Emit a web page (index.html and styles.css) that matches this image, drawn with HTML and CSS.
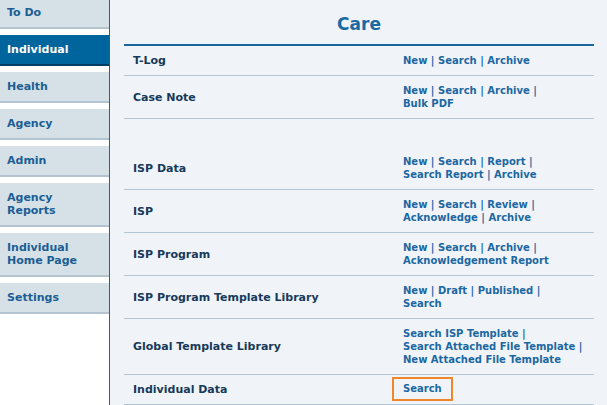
FILE: index.html
```html
<!DOCTYPE html>
<html>
<head>
<meta charset="utf-8">
<link rel="stylesheet" href="styles.css">
</head>
<body>
<div class="page">
  <nav class="sidebar">
    <div class="tab tab-first">To Do</div>
    <div class="tab tab-active">Individual</div>
    <div class="tab">Health</div>
    <div class="tab">Agency</div>
    <div class="tab">Admin</div>
    <div class="tab">Agency<br>Reports</div>
    <div class="tab">Individual<br>Home Page</div>
    <div class="tab">Settings</div>
  </nav>
  <main class="main">
    <h1 class="title">Care</h1>
    <div class="care-table">
      <div class="row">
        <div class="label">T-Log</div>
        <div class="links"><a>New</a> | <a>Search</a> | <a>Archive</a></div>
      </div>
      <div class="row">
        <div class="label">Case Note</div>
        <div class="links"><a>New</a> | <a>Search</a> | <a>Archive</a> |<br><a>Bulk PDF</a></div>
      </div>
      <div class="spacer"></div>
      <div class="row">
        <div class="label">ISP Data</div>
        <div class="links"><a>New</a> | <a>Search</a> | <a>Report</a> |<br><a>Search Report</a> | <a>Archive</a></div>
      </div>
      <div class="row">
        <div class="label">ISP</div>
        <div class="links"><a>New</a> | <a>Search</a> | <a>Review</a> |<br><a>Acknowledge</a> | <a>Archive</a></div>
      </div>
      <div class="row">
        <div class="label">ISP Program</div>
        <div class="links"><a>New</a> | <a>Search</a> | <a>Archive</a> |<br><a>Acknowledgement Report</a></div>
      </div>
      <div class="row">
        <div class="label">ISP Program Template Library</div>
        <div class="links"><a>New</a> | <a>Draft</a> | <a>Published</a> |<br><a>Search</a></div>
      </div>
      <div class="row">
        <div class="label">Global Template Library</div>
        <div class="links"><a>Search ISP Template</a> |<br><a>Search Attached File Template</a> |<br><a>New Attached File Template</a></div>
      </div>
      <div class="row">
        <div class="label">Individual Data</div>
        <div class="links links-focus"><a class="focus-box">Search</a></div>
      </div>
    </div>
  </main>
</div>
</body>
</html>
```

FILE: styles.css
```css
html, body {
  margin: 0;
  padding: 0;
  height: 100%;
  overflow: hidden;
}

body {
  font-family: "DejaVu Sans", Verdana, sans-serif;
  font-weight: bold;
}

.page {
  display: flex;
  height: 100vh;
}

.sidebar {
  width: 109px;
  flex: none;
  background: #ffffff;
  display: flex;
  flex-direction: column;
  gap: 6px;
  margin-top: -2px;
}

.tab {
  background: #d6e0e7;
  border-bottom: 2px solid #b3c3cf;
  color: #1c5e93;
  font-size: 11px;
  line-height: 13px;
  padding: 8px 4px 8px 7px;
}

.tab-active {
  background: #00659c;
  border-bottom-color: #003d63;
  color: #ffffff;
}

.main {
  flex: 1;
  background: #f0f4f8;
  border-left: 1px solid #19669b;
  padding: 0 13px 0 14px;
}

.title {
  margin: 0;
  padding: 14px 0 10px;
  font-size: 17px;
  line-height: 20px;
  text-align: center;
  color: #186aa3;
}

.care-table {
  border-top: 2px solid #19679d;
}

.row {
  display: grid;
  grid-template-columns: 270px 1fr;
  align-items: center;
  border-bottom: 1px solid #b3c6d6;
}

.spacer {
  height: 28px;
}

.label {
  padding: 8px 9px;
  font-size: 11px;
  line-height: 13px;
  color: #17395a;
}

.links {
  padding: 8px 9px;
  font-size: 10px;
  line-height: 13px;
  color: #1c67a2;
  white-space: nowrap;
}

.links a {
  color: inherit;
  text-decoration: none;
}

.links-focus {
  padding: 2px 0 3px;
}

.links .focus-box {
  display: inline-block;
  vertical-align: top;
  margin-left: -2px;
  border: 2px solid #f0862a;
  padding: 3px 9px 4px;
  line-height: 13px;
}
```
